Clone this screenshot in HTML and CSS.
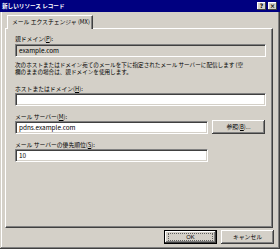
FILE: index.html
```html
<!DOCTYPE html>
<html lang="ja">

<head>
	<meta charset="UTF-8">
	<title>新しいリソース レコード</title>
	<link rel="stylesheet" href="styles.css">
</head>

<body>
	<div class="window">
		<div class="titlebar">
			<span class="title">新しいリソース レコード</span>
			<span class="caption-btns">
				<span class="cap-btn">?</span>
				<span class="cap-btn">×</span>
			</span>
		</div>
		<div class="tabs">
			<div class="tab">メール エクスチェンジャ (MX)</div>
		</div>
		<div class="panel">
			<div class="label">親ドメイン(<u>P</u>):</div>
			<div class="field readonly">example.com</div>
			<p class="note">次のホストまたはドメイン宛てのメールを下に指定されたメール サーバーに配信します (空<br>欄のままの場合は、親ドメインを使用します。</p>
			<div class="label gap-lg">ホストまたはドメイン(<u>H</u>):</div>
			<div class="field"></div>
			<div class="label">メール サーバー(<u>M</u>):</div>
			<div class="field-row">
				<div class="field short">pdns.example.com</div>
				<button class="btn browse">参照(<u>B</u>)...</button>
			</div>
			<div class="label">メール サーバーの優先順位(<u>S</u>):</div>
			<div class="field short">10</div>
		</div>
		<div class="footer">
			<button class="btn default"><span class="focus">OK</span></button>
			<button class="btn">キャンセル</button>
		</div>
	</div>
</body>

</html>
```

FILE: styles.css
```css
body
{
	margin: 0;
	background-color: #d4d0c8;
	font-family: "Noto Sans CJK JP", "Liberation Sans", sans-serif;
	font-size: 5.8px;
	color: #000000;
}

.window
{
	width: 280px;
	height: 249px;
	box-sizing: border-box;
	padding: 0 2px 2px 2px;
	background-color: #d4d0c8;
	box-shadow: inset -1px -1px #404040, inset 1px 1px #d4d0c8, inset -2px -2px #808080, inset 2px 2px #ffffff;
	display: flex;
	flex-direction: column;
}

.titlebar
{
	height: 12px;
	margin: 0 -2px;
	padding: 0 3px 0 2px;
	background-color: #000080;
	display: flex;
	align-items: center;
	justify-content: space-between;
}

.title
{
	color: #ffffff;
	font-weight: bold;
	font-size: 5.6px;
	line-height: 12px;
}

.caption-btns
{
	display: flex;
	gap: 2px;
}

.cap-btn
{
	width: 9px;
	height: 8px;
	box-sizing: border-box;
	background-color: #d4d0c8;
	box-shadow: inset -1px -1px #404040, inset 1px 1px #ffffff;
	font-size: 6px;
	font-weight: bold;
	line-height: 8px;
	text-align: center;
	font-family: "DejaVu Sans", sans-serif;
}

.tabs
{
	padding: 3px 0 0 5px;
	display: flex;
}

.tab
{
	position: relative;
	height: 14px;
	box-sizing: border-box;
	margin-bottom: -1px;
	padding: 0 4px 0 4px;
	width: 86px;
	background-color: #d4d0c8;
	border-top: 1px solid #ffffff;
	border-left: 1px solid #ffffff;
	border-right: 1px solid #404040;
	box-shadow: inset -1px 0 #808080;
	line-height: 12px;
	white-space: nowrap;
}

.panel
{
	height: 200px;
	box-sizing: border-box;
	margin: 0 5px 0 3px;
	padding: 5px 6px 0 9px;
	border-top: 1px solid #ffffff;
	border-left: 1px solid #ffffff;
	border-right: 1px solid #404040;
	border-bottom: 1px solid #404040;
	box-shadow: inset -1px -1px #808080;
}

.label
{
	line-height: 9px;
	margin-top: 6px;
	white-space: nowrap;
}

.panel > .label:first-child
{
	margin-top: 0;
}

.label.gap-lg
{
	margin-top: 8px;
}

.field
{
	height: 13px;
	box-sizing: border-box;
	background-color: #ffffff;
	border-top: 1px solid #808080;
	border-left: 1px solid #808080;
	border-right: 1px solid #ffffff;
	border-bottom: 1px solid #ffffff;
	box-shadow: inset 1px 1px #404040, inset -1px -1px #d4d0c8;
	padding: 0 3px;
	line-height: 11px;
	font-size: 6.4px;
	white-space: nowrap;
	overflow: hidden;
}

.field.readonly
{
	margin-top: 1px;
	background-color: #d4d0c8;
}

.field.short
{
	width: 193px;
}

.field-row
{
	display: flex;
	align-items: flex-start;
}

.note
{
	margin: 5px 0 0 0;
	font-size: 5.6px;
	line-height: 7px;
	white-space: nowrap;
}

.btn
{
	height: 14px;
	width: 53px;
	box-sizing: border-box;
	padding: 0;
	border: none;
	background-color: #d4d0c8;
	box-shadow: inset -1px -1px #404040, inset 1px 1px #ffffff, inset -2px -2px #808080;
	font-family: "Noto Sans CJK JP", "Liberation Sans", sans-serif;
	font-size: 5.8px;
	line-height: 12px;
	color: #000000;
}

.browse
{
	margin: -1px 0 0 4px;
}

.footer
{
	margin-top: 2px;
	padding-right: 4px;
	display: flex;
	justify-content: flex-end;
	gap: 4px;
}

.btn.default
{
	border: 1px solid #000000;
	padding: 2px 3px;
}

.focus
{
	display: block;
	height: 100%;
	box-sizing: border-box;
	border: 1px dotted #606060;
	line-height: 6px;
	font-family: "Liberation Sans", sans-serif;
}
```
